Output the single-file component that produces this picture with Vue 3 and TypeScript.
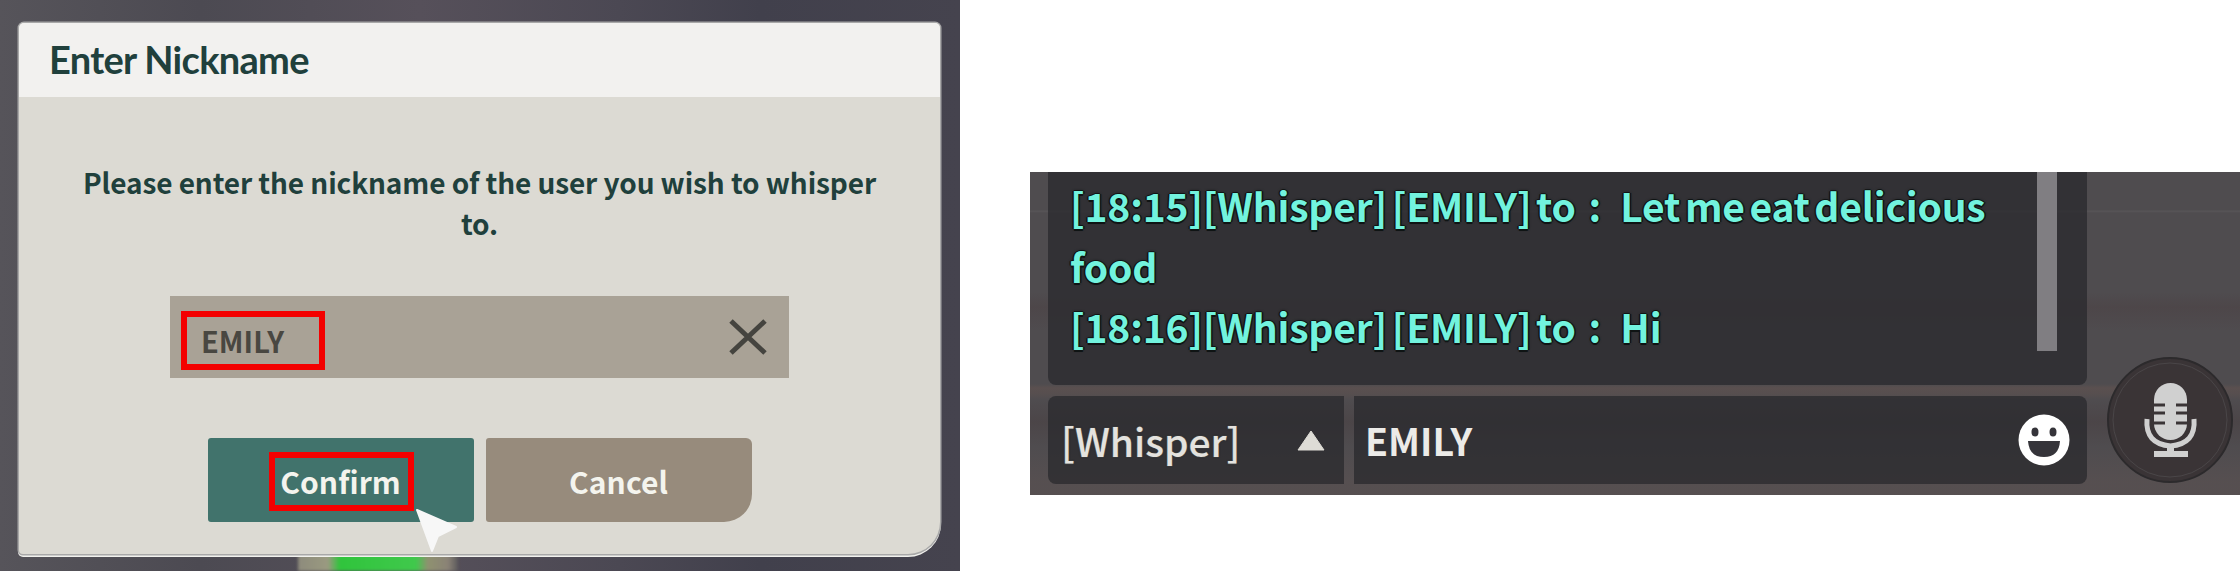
<script setup lang="ts">
const lines: string[] = ['18:15', '18:16'].map((time, i) =>
  `[${time}][Whisper] [EMILY] to\u2004:\u2002${i === 0 ? 'Let me eat delicious food' : 'Hi'}`,
)
</script>

<template>
  <div class="root">
    <section class="left">
      <div class="glow"></div>
      <div class="dialog">
        <header class="head">Enter Nickname</header>
        <div class="body">
          <p class="msg">Please enter the nickname of the user you wish to whisper to.</p>
          <div class="field">
            <span class="name">EMILY</span>
            <svg class="clear" viewBox="0 0 38 36" width="38" height="36">
              <path d="M2 2 L36 34 M36 2 L2 34" stroke="#45443f" stroke-width="5" fill="none" />
            </svg>
            <span class="mark mark-name"></span>
          </div>
          <div class="btns">
            <button class="btn ok">Confirm<span class="mark mark-ok"></span></button>
            <button class="btn no">Cancel</button>
          </div>
        </div>
        <svg class="cursor" viewBox="-2 -2 46 48" width="46" height="48">
          <path d="M1 1 L40 18 L22 27 L16 42 Z" fill="#f7f7f7" stroke="#f7f7f7" stroke-width="2" stroke-linejoin="round" />
        </svg>
      </div>
    </section>

    <section class="right">
      <div class="panel log">
        <div class="lines">
          <p v-for="l in lines" :key="l" class="line">{{ l }}</p>
        </div>
        <div class="scroll"></div>
      </div>
      <div class="row">
        <div class="panel select">
          <span>[Whisper]</span>
          <svg viewBox="0 0 28 21" width="28" height="21"><path d="M14 1 L27 20 H1 Z" fill="#dedcd6" stroke="#dedcd6" stroke-linejoin="round" /></svg>
        </div>
        <div class="panel input">
          <span>EMILY</span>
          <svg viewBox="0 0 52 52" width="52" height="52">
            <circle cx="26" cy="26" r="25.5" fill="#fff" />
            <ellipse cx="17" cy="18" rx="3.5" ry="4.5" fill="#35343a" />
            <ellipse cx="35" cy="18" rx="3.5" ry="4.5" fill="#35343a" />
            <path d="M10 27 H42 Q41 43 26 43 Q11 43 10 27 Z" fill="#35343a" />
          </svg>
        </div>
      </div>
      <div class="mic">
        <svg viewBox="0 0 126 126" width="126" height="126">
          <circle cx="63" cy="63" r="62" fill="#3a3436" stroke="#2c2a2c" stroke-width="2" />
          <circle cx="63" cy="63" r="57" fill="none" stroke="#4a4648" stroke-width="1" />
          <rect x="47" y="26" width="33" height="57" rx="16.5" fill="#d0d0d0" />
          <path d="M47 48 H58 M69 48 H80 M47 56 H58 M69 56 H80 M47 66 H58 M69 66 H80" stroke="#3a3436" stroke-width="3" />
          <path d="M40 62 Q38 87 63.5 89 Q89 87 87 62" fill="none" stroke="#d0d0d0" stroke-width="5" />
          <path d="M60 89 H67 V94 H81 V100 H47 V94 H60 Z" fill="#d0d0d0" />
        </svg>
      </div>
    </section>
  </div>
</template>

<style>
html, body { margin: 0; background: #fff; }
</style>

<style scoped>
.root {
  width: 2240px;
  height: 571px;
  display: flex;
  background: #fff;
  overflow: hidden;
}
.left {
  position: relative;
  width: 960px;
  height: 571px;
  box-sizing: border-box;
  padding: 23px 20px 17px 19px;
  background:
    linear-gradient(90deg, #56545a 0, #4c4a52 200px, #56505a 420px, #4b4853 620px, #41404c 760px, #45434e 960px);
}
.glow {
  position: absolute;
  left: 298px;
  top: 548px;
  width: 160px;
  height: 23px;
  background: linear-gradient(90deg, #8d8b7c 0, #9a9a80 30px, #30c43c 42px, #40c84c 118px, #8f9170 130px, #8a8276 150px, #5c5a5c 160px);
  filter: blur(1.5px);
}
.dialog {
  position: relative;
  height: 531px;
  background: #dcdad3;
  border-radius: 5px 5px 32px 4px;
  box-shadow: 0 0 0 1.5px #a8a8a8, 0 2px 0 1px #f2f2ee;
  display: flex;
  flex-direction: column;
}
.head {
  height: 74px;
  box-sizing: border-box;
  padding: 0 0 0 30px;
  background: #f2f1ef;
  border-radius: 5px 5px 0 0;
  color: #20403c;
  font: 700 38px/72px Lato, "Liberation Sans", sans-serif;
  letter-spacing: -0.7px;
}
.body {
  flex: 1;
  display: flex;
  flex-direction: column;
  align-items: center;
}
.msg {
  width: 800px;
  margin: 65px 0 0;
  text-align: center;
  color: #20403c;
  font: 700 28px/41px "Noto Sans CJK KR", "Noto Sans", sans-serif;
  letter-spacing: -0.1px;
}
.field {
  position: relative;
  width: 619px;
  height: 82px;
  margin-top: 52px;
  background: #a9a296;
  display: flex;
  align-items: center;
  justify-content: space-between;
  padding: 0 22px 0 31px;
  box-sizing: border-box;
}
.name {
  color: #494741;
  font: 700 29px/1 "Noto Sans CJK KR", "Noto Sans", sans-serif;
  margin-top: 6px;
}
.mark {
  position: absolute;
  border: 6px solid #f40000;
  box-sizing: border-box;
}
.mark-name { left: 11px; top: 15px; width: 144px; height: 59px; }
.btns {
  display: flex;
  gap: 12px;
  margin-top: 60px;
}
.btn {
  position: relative;
  width: 266px;
  height: 84px;
  border: 0;
  padding: 2px 0 0;
  color: #f4f4ee;
  font: 700 30px/82px "Noto Sans CJK KR", "Noto Sans", sans-serif;
  letter-spacing: 0.1px;
}
.ok { background: #41736c; border-radius: 3px; }
.no { background: #978b7c; border-radius: 3px 6px 28px 3px; }
.mark-ok { left: 61px; top: 14px; width: 145px; height: 59px; }
.cursor {
  position: absolute;
  left: 395px;
  top: 484px;
}
.right {
  position: relative;
  width: 1210px;
  height: 323px;
  margin: 172px 0 0 70px;
  box-sizing: border-box;
  padding: 0 0 0 18px;
  background:
    linear-gradient(180deg,
      transparent 0, transparent 38px, rgba(255,255,255,.05) 39px, transparent 41px,
      transparent 120px, rgba(60,20,20,.10) 135px, transparent 160px,
      transparent 212px, rgba(120,90,80,.28) 216px, rgba(120,90,80,.18) 222px, transparent 228px,
      rgba(50,20,20,.12) 250px, transparent 275px, rgba(110,90,85,.22) 310px, rgba(110,90,85,.22) 323px),
    #4f4c4f;
  display: flex;
  flex-direction: column;
}
.panel {
  background: rgba(40, 40, 45, .74);
}
.log {
  position: relative;
  width: 1039px;
  height: 213px;
  box-sizing: border-box;
  padding: 3px 0 0 22px;
  border-radius: 0 0 8px 8px;
}
.lines { width: 960px; }
.line {
  margin: 0;
  color: #72f3de;
  font: 700 39px/60.5px "Noto Sans CJK KR", "Noto Sans", sans-serif;
  text-shadow: 1.5px 0 0 #0f1414, -1.5px 0 0 #0f1414, 0 1.5px 0 #0f1414, 0 -1.5px 0 #0f1414, 0 0 3px #0f1414;
  letter-spacing: -0.2px;
  word-spacing: -4px;
}
.scroll {
  position: absolute;
  left: 989px;
  top: 0;
  width: 20px;
  height: 179px;
  background: #807e82;
}
.row {
  display: flex;
  gap: 10px;
  width: 1039px;
  height: 88px;
  margin-top: 11px;
}
.select {
  width: 296px;
  box-sizing: border-box;
  padding: 0 19px 0 13px;
  border-radius: 8px 0 0 8px;
  display: flex;
  align-items: center;
  justify-content: space-between;
  color: #e4e2de;
  font: 500 39px/1 "Noto Sans CJK KR", "Noto Sans", sans-serif;
  text-shadow: 0 0 2px #0f1414, 0 0 1px #e4e2de;
}
.input {
  flex: 1;
  box-sizing: border-box;
  padding: 0 17px 0 11px;
  border-radius: 0 8px 8px 0;
  display: flex;
  align-items: center;
  justify-content: space-between;
  color: #ecebe8;
  font: 700 37.5px/1 "Noto Sans CJK KR", "Noto Sans", sans-serif;
}
.mic {
  position: absolute;
  left: 1077px;
  top: 185px;
  width: 126px;
  height: 126px;
}
</style>
